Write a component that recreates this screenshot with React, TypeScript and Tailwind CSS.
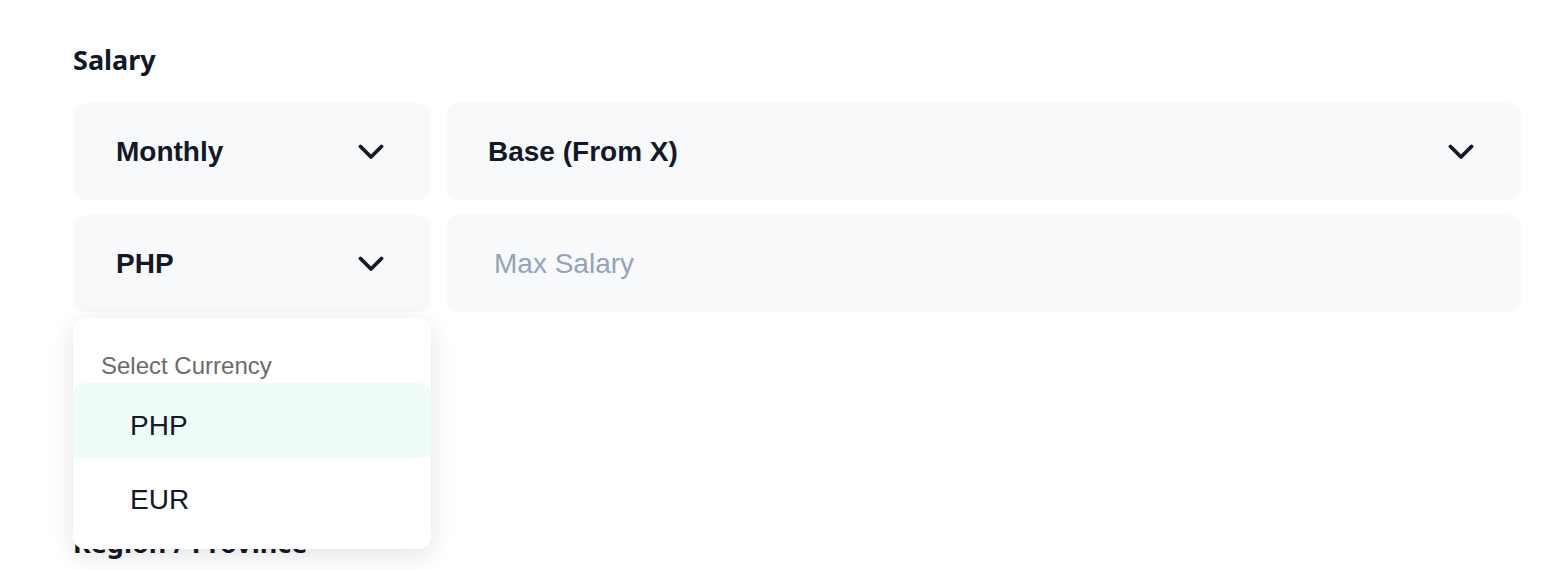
import { useState } from 'react';

const Chevron = () => (
  <svg width="26" height="16" viewBox="0 0 26 16" fill="none" className="shrink-0">
    <polyline
      points="2.5,2.5 13,13 23.5,2.5"
      stroke="#111827"
      strokeWidth="3.8"
      strokeLinecap="round"
      strokeLinejoin="round"
    />
  </svg>
);

function SelectBox({ value, padLeft = 'pl-[43px]' }: { value: string; padLeft?: string }) {
  return (
    <button
      className={`flex h-[97px] w-full items-center justify-between rounded-[12px] bg-[#f8f9fb] ${padLeft} pr-[47px] text-left`}
    >
      <span className="font-['Liberation_Sans',Arial,sans-serif] text-[28px] font-bold leading-[32px] text-[#111827]">
        {value}
      </span>
      <Chevron />
    </button>
  );
}

export default function App() {
  const [currency, setCurrency] = useState('PHP');
  const options = ['PHP', 'EUR'];

  return (
    <div className="min-h-screen bg-white pl-[73px] pr-[41px] pt-[42px]">
      <div className="mb-[26px] font-['Noto_Sans',sans-serif] text-[27px] font-bold leading-[35px] text-[#111827]">
        Salary
      </div>

      <div className="grid grid-cols-[358px_1fr] gap-[15px]">
        <SelectBox value="Monthly" />
        <SelectBox value="Base (From X)" padLeft="pl-[42px]" />

        <div className="relative">
          <SelectBox value={currency} />
          <div className="absolute left-0 top-full z-10 mt-[6px] w-full rounded-[12px] bg-white pb-[18px] pt-[34px] shadow-[0_6px_24px_rgba(15,23,42,0.12)]">
            <div className="mb-[3px] pl-[28px] font-['Liberation_Sans',Arial,sans-serif] text-[24px] leading-[28px] text-[#6b6b6b]">
              Select Currency
            </div>
            {options.map((opt) => (
              <div
                key={opt}
                onClick={() => setCurrency(opt)}
                className={`h-[74px] cursor-pointer pl-[57px] pt-[27px] font-['Liberation_Sans',Arial,sans-serif] text-[28px] leading-[32px] text-[#111827] ${
                  opt === currency ? 'rounded-t-[12px] bg-[#f0fcf7]' : ''
                }`}
              >
                {opt}
              </div>
            ))}
          </div>
        </div>

        <input
          placeholder="Max Salary"
          className="h-[97px] w-full rounded-[12px] bg-[#f8f9fb] pl-[48px] font-['Liberation_Sans',Arial,sans-serif] text-[28px] text-[#111827] outline-none placeholder:text-[#94a3b8]"
        />
      </div>

      <div className="mt-[213px] font-['Noto_Sans',sans-serif] text-[27px] font-bold leading-[35px] text-[#111827]">
        Region / Province
      </div>
    </div>
  );
}
